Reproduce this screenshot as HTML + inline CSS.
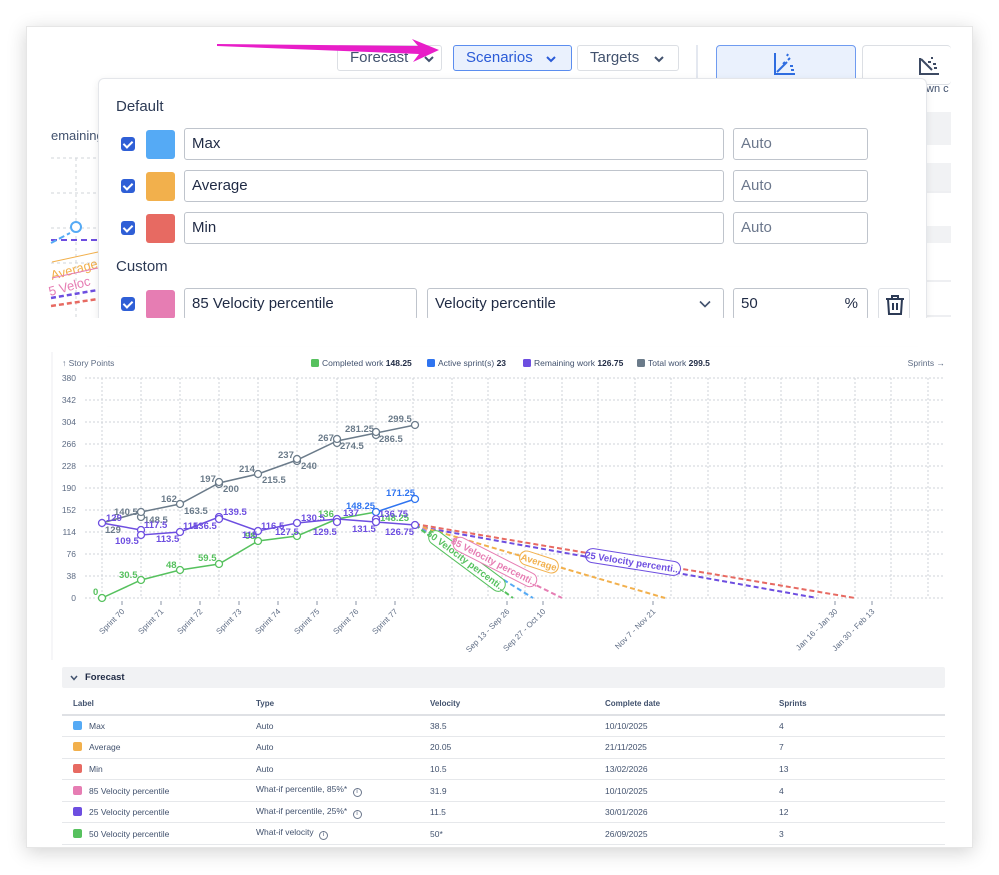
<!DOCTYPE html>
<html><head><meta charset="utf-8">
<style>
*{box-sizing:border-box;margin:0;padding:0}
body{width:999px;height:875px;background:#fff;position:relative;overflow:hidden;font-family:"Liberation Sans",sans-serif;color:#1f2a44}
.abs{position:absolute}
.card{left:26px;top:26px;width:947px;height:822px;background:#fff;box-shadow:0 4px 18px rgba(0,0,0,.18);border:1px solid #e6e6e6}
.btn{position:absolute;height:26px;border:1px solid #dcdfe4;border-radius:3px;background:#fff;font-size:15px;color:#42526e;line-height:24px;padding-left:12px}
.btn svg,.in svg{position:absolute;top:9px}
.pop{left:98px;top:78px;width:829px;height:260px;background:#fff;border:1px solid #e4e6ea;border-radius:6px;box-shadow:0 2px 8px rgba(0,0,0,.08)}
.h{font-size:15px;color:#2c3a55}
.cb{position:absolute;width:14px;height:14px;border-radius:3px;background:#2f5fd6}
.cb:after{content:"";position:absolute;left:4px;top:2px;width:4px;height:7px;border:solid #fff;border-width:0 2px 2px 0;transform:rotate(45deg)}
.sw{position:absolute;width:29px;height:29px;border-radius:3px}
.in{position:absolute;height:32px;border:1.5px solid #bfc4cc;border-radius:3px;font-size:15px;line-height:30px;padding-left:7px;color:#1f2a44;background:#fff}
.ph{color:#6b778c}
table{border-collapse:collapse}
.tb{left:62px;top:693px;width:883px;font-size:8.5px;color:#42526e}
.tb td{height:21.6px;border-bottom:1px solid #e6e8eb;vertical-align:middle}
.tb th{height:22px;text-align:left;font-weight:bold;color:#42526e;border-bottom:2px solid #dfe1e5;font-size:8px}
.s{display:inline-block;width:9px;height:9px;border-radius:2px;vertical-align:-1px;margin-right:7px}
.i{display:inline-block;width:9px;height:9px;border:1px solid #6b778c;border-radius:50%;font-size:6px;line-height:7px;text-align:center;margin-left:3px;vertical-align:-1px}
</style></head><body>
<div class="abs card"></div>

<div class="abs" style="left:51px;top:128px;font-size:13px;color:#42526e">emaining</div>
<svg class="abs" style="left:0;top:0" width="999" height="330">
<g stroke="#d0d4da" stroke-dasharray="3 3" stroke-width="1">
<line x1="51" y1="158" x2="98" y2="158"/><line x1="51" y1="193" x2="98" y2="193"/><line x1="51" y1="228" x2="98" y2="228"/><line x1="51" y1="263" x2="98" y2="263"/><line x1="76" y1="158" x2="76" y2="318"/>
</g>
<line x1="51" y1="240" x2="98" y2="240" stroke="#6d4ee0" stroke-width="2" stroke-dasharray="6 4"/>
<line x1="51" y1="243" x2="70" y2="233" stroke="#55aaf5" stroke-width="2" stroke-dasharray="6 3"/>
<circle cx="76" cy="227" r="5" fill="#fff" stroke="#55aaf5" stroke-width="2"/>
<text x="52" y="280" font-size="13" fill="#f2b04c" transform="rotate(-15 52 280)">Average</text>
<text x="50" y="296" font-size="13" fill="#e67db3" transform="rotate(-15 50 296)">5 Veloc</text>
<line x1="51" y1="298" x2="98" y2="290" stroke="#6d4ee0" stroke-width="2.5" stroke-dasharray="5 3"/>
<line x1="51" y1="306" x2="98" y2="299" stroke="#e76a62" stroke-width="2.5" stroke-dasharray="5 3"/>
<line x1="52" y1="262" x2="98" y2="252" stroke="#f2b04c" stroke-width="1"/>
<line x1="52" y1="278" x2="98" y2="268" stroke="#e67db3" stroke-width="1"/>
<rect x="927" y="112" width="24" height="33" fill="#f1f2f4"/>
<rect x="927" y="163" width="24" height="28" fill="#f1f2f4"/>
<line x1="927" y1="192" x2="951" y2="192" stroke="#dcdfe4"/>
<rect x="927" y="226" width="24" height="17" fill="#f1f2f4"/>
<line x1="927" y1="281" x2="951" y2="281" stroke="#dcdfe4"/>
<line x1="927" y1="316" x2="951" y2="316" stroke="#dcdfe4"/>
<line x1="697" y1="45" x2="697" y2="80" stroke="#e4e8f0" stroke-width="2"/>
</svg>

<div class="btn" style="left:337px;top:45px;width:105px">Forecast<svg style="left:86px" width="10" height="8"><path d="M1 2 L5 6 L9 2" stroke="#42526e" stroke-width="2" fill="none"/></svg></div>
<div class="btn" style="left:453px;top:45px;width:119px;border-color:#5b8def;background:#eaf1fd;color:#2a5bd7">Scenarios<svg style="left:92px" width="10" height="8"><path d="M1 2 L5 6 L9 2" stroke="#2a5bd7" stroke-width="2" fill="none"/></svg></div>
<div class="btn" style="left:577px;top:45px;width:102px">Targets<svg style="left:76px" width="10" height="8"><path d="M1 2 L5 6 L9 2" stroke="#42526e" stroke-width="2" fill="none"/></svg></div>
<div class="abs" style="left:716px;top:45px;width:140px;height:40px;border:1px solid #6f9bf0;border-radius:4px;background:#eaf1fd"></div>
<div class="abs" style="left:862px;top:45px;width:89px;height:40px;border:1px solid #dcdfe4;border-radius:4px;border-right:none;background:#fff"></div>
<div class="abs" style="left:926px;top:83px;font-size:11px;color:#42526e">wn c</div>
<svg class="abs" style="left:0;top:0" width="999" height="90">
<g stroke="#2f6de0" stroke-width="2" fill="none"><path d="M775 53 V74 H795"/><path d="M777 72 L787 62" /><path d="M783 64 l2-2 M788 60 l2-2 M790 66 h3 M791 70 h3 M787 56 l1-2"/></g>
<g stroke="#3d4a63" stroke-width="2" fill="none"><path d="M920 58 V74 H939"/><path d="M921 59 L932 70"/><path d="M928 62 h3 M933 64 h3 M931 58 l2 0 M934 68 h3"/></g>
<polygon points="217,44 418,46 412,39 439,50 413,62 419,54 217,46" fill="#e81ec8"/>
</svg>

<div class="abs pop">
<div class="abs h" style="left:17px;top:19px">Default</div>
<div class="cb" style="left:22px;top:58px"></div><div class="sw" style="left:47px;top:51px;background:#55aaf5"></div>
<div class="in" style="left:85px;top:49px;width:540px">Max</div><div class="in ph" style="left:634px;top:49px;width:135px">Auto</div>
<div class="cb" style="left:22px;top:100px"></div><div class="sw" style="left:47px;top:93px;background:#f2b04c"></div>
<div class="in" style="left:85px;top:91px;width:540px">Average</div><div class="in ph" style="left:634px;top:91px;width:135px">Auto</div>
<div class="cb" style="left:22px;top:142px"></div><div class="sw" style="left:47px;top:135px;background:#e76a62"></div>
<div class="in" style="left:85px;top:133px;width:540px">Min</div><div class="in ph" style="left:634px;top:133px;width:135px">Auto</div>
<div class="abs h" style="left:17px;top:179px">Custom</div>
<div class="cb" style="left:22px;top:218px"></div><div class="sw" style="left:47px;top:211px;background:#e67db3"></div>
<div class="in" style="left:85px;top:209px;width:233px">85 Velocity percentile</div>
<div class="in" style="left:328px;top:209px;width:297px">Velocity percentile<svg style="left:271px;top:11px" width="12" height="8"><path d="M1 1.5 L6 6.5 L11 1.5" stroke="#42526e" stroke-width="1.6" fill="none"/></svg></div>
<div class="in" style="left:634px;top:209px;width:135px">50<span style="position:absolute;right:9px">%</span></div>
<div class="abs" style="left:779px;top:209px;width:32px;height:32px;border:1px solid #dcdfe4;border-radius:3px">
<svg width="32" height="32"><g stroke="#2c3a55" stroke-width="2" fill="none"><path d="M7 10 H25 M13 10 V7 H19 V10 M9 10 L10 25 H22 L23 10 M14 14 V21 M18 14 V21"/></g></svg></div>
</div>
<div class="abs" style="left:27px;top:318px;width:945px;height:28px;background:#fff"></div>

<svg class="abs" style="left:0;top:0" width="999" height="660" font-family="Liberation Sans, sans-serif">
<line x1="52" y1="352" x2="52" y2="660" stroke="#eceef1"/>
<text x="62" y="366" font-size="8.5" fill="#5e6c84">↑ Story Points</text>
<rect x="311" y="359" width="8" height="8" rx="1.5" fill="#56c15e"/><text x="322" y="366" font-size="8.5" fill="#42526e">Completed work <tspan font-weight="bold" fill="#1f2a44">148.25</tspan></text>
<rect x="427" y="359" width="8" height="8" rx="1.5" fill="#2f74f0"/><text x="438" y="366" font-size="8.5" fill="#42526e">Active sprint(s) <tspan font-weight="bold" fill="#1f2a44">23</tspan></text>
<rect x="523" y="359" width="8" height="8" rx="1.5" fill="#6d4ee0"/><text x="534" y="366" font-size="8.5" fill="#42526e">Remaining work <tspan font-weight="bold" fill="#1f2a44">126.75</tspan></text>
<rect x="637" y="359" width="8" height="8" rx="1.5" fill="#6b7b8a"/><text x="648" y="366" font-size="8.5" fill="#42526e">Total work <tspan font-weight="bold" fill="#1f2a44">299.5</tspan></text>
<text x="945" y="366" font-size="8.5" fill="#5e6c84" text-anchor="end">Sprints →</text>
<g font-size="8.5" fill="#5e6c84" text-anchor="end">
<text x="76" y="381">380</text><text x="76" y="403">342</text><text x="76" y="425">304</text><text x="76" y="447">266</text><text x="76" y="469">228</text><text x="76" y="491">190</text><text x="76" y="513">152</text><text x="76" y="535">114</text><text x="76" y="557">76</text><text x="76" y="579">38</text><text x="76" y="601">0</text>
</g>
<g stroke="#cfd3d9" stroke-dasharray="2 2" stroke-width="1">
<line x1="85" y1="378" x2="945" y2="378"/><line x1="85" y1="400" x2="945" y2="400"/><line x1="85" y1="422" x2="945" y2="422"/><line x1="85" y1="444" x2="945" y2="444"/><line x1="85" y1="466" x2="945" y2="466"/><line x1="85" y1="488" x2="945" y2="488"/><line x1="85" y1="510" x2="945" y2="510"/><line x1="85" y1="532" x2="945" y2="532"/><line x1="85" y1="554" x2="945" y2="554"/><line x1="85" y1="576" x2="945" y2="576"/><line x1="85" y1="598" x2="945" y2="598"/>
<line x1="102" y1="378" x2="102" y2="598"/><line x1="141" y1="378" x2="141" y2="598"/><line x1="180" y1="378" x2="180" y2="598"/><line x1="219" y1="378" x2="219" y2="598"/><line x1="258" y1="378" x2="258" y2="598"/><line x1="297" y1="378" x2="297" y2="598"/><line x1="337" y1="378" x2="337" y2="598"/><line x1="376" y1="378" x2="376" y2="598"/><line x1="413" y1="378" x2="413" y2="598"/><line x1="452" y1="378" x2="452" y2="598"/><line x1="488" y1="378" x2="488" y2="598"/><line x1="525" y1="378" x2="525" y2="598"/><line x1="562" y1="378" x2="562" y2="598"/><line x1="598" y1="378" x2="598" y2="598"/><line x1="635" y1="378" x2="635" y2="598"/><line x1="671" y1="378" x2="671" y2="598"/><line x1="708" y1="378" x2="708" y2="598"/><line x1="745" y1="378" x2="745" y2="598"/><line x1="781" y1="378" x2="781" y2="598"/><line x1="818" y1="378" x2="818" y2="598"/><line x1="855" y1="378" x2="855" y2="598"/><line x1="891" y1="378" x2="891" y2="598"/><line x1="928" y1="378" x2="928" y2="598"/>
</g>
<g stroke="#8993a4" stroke-width="1">
<line x1="122" y1="601" x2="122" y2="605"/><line x1="161" y1="601" x2="161" y2="605"/><line x1="200" y1="601" x2="200" y2="605"/><line x1="239" y1="601" x2="239" y2="605"/><line x1="278" y1="601" x2="278" y2="605"/><line x1="317" y1="601" x2="317" y2="605"/><line x1="356" y1="601" x2="356" y2="605"/><line x1="395" y1="601" x2="395" y2="605"/>
<line x1="507" y1="601" x2="507" y2="605"/><line x1="543" y1="601" x2="543" y2="605"/><line x1="653" y1="601" x2="653" y2="605"/><line x1="835" y1="601" x2="835" y2="605"/><line x1="872" y1="601" x2="872" y2="605"/>
</g>
<g font-size="8" fill="#5e6c84" text-anchor="end">
<text transform="translate(125,612) rotate(-45)">Sprint 70</text><text transform="translate(164,612) rotate(-45)">Sprint 71</text><text transform="translate(203,612) rotate(-45)">Sprint 72</text><text transform="translate(242,612) rotate(-45)">Sprint 73</text><text transform="translate(281,612) rotate(-45)">Sprint 74</text><text transform="translate(320,612) rotate(-45)">Sprint 75</text><text transform="translate(359,612) rotate(-45)">Sprint 76</text><text transform="translate(398,612) rotate(-45)">Sprint 77</text>
<text transform="translate(510,612) rotate(-45)">Sep 13 - Sep 26</text><text transform="translate(546,612) rotate(-45)">Sep 27 - Oct 10</text><text transform="translate(656,612) rotate(-45)">Nov 7 - Nov 21</text><text transform="translate(838,612) rotate(-45)">Jan 16 - Jan 30</text><text transform="translate(875,612) rotate(-45)">Jan 30 - Feb 13</text>
</g>
<g stroke-width="2" stroke-dasharray="5 3" fill="none">
<line x1="415" y1="524" x2="855" y2="598" stroke="#e76a62"/>
<line x1="415" y1="526" x2="817" y2="598" stroke="#6d4ee0"/>
<line x1="415" y1="525" x2="665" y2="598" stroke="#f2b04c"/>
<line x1="415" y1="525" x2="562" y2="598" stroke="#e67db3"/>
<line x1="415" y1="525" x2="533" y2="598" stroke="#55aaf5"/>
<line x1="415" y1="525" x2="513" y2="598" stroke="#56c15e"/>
</g>
<g font-size="9.5" font-weight="bold">
<g transform="translate(467,561) rotate(36.7)"><rect x="-46" y="-7" width="92" height="14" rx="7" fill="#fff" stroke="#56c15e"/><text x="0" y="3.5" fill="#56c15e" text-anchor="middle">50 Velocity percenti...</text></g>
<g transform="translate(495,562) rotate(27)"><rect x="-46" y="-7" width="92" height="14" rx="7" fill="#fff" stroke="#e67db3"/><text x="0" y="3.5" fill="#e67db3" text-anchor="middle">85 Velocity percenti...</text></g>
<g transform="translate(539,562) rotate(18)"><rect x="-20" y="-7" width="40" height="14" rx="7" fill="#fff" stroke="#f2b04c"/><text x="0" y="3.5" fill="#f2b04c" text-anchor="middle">Average</text></g>
<g transform="translate(633,562) rotate(9)"><rect x="-48" y="-7" width="96" height="14" rx="7" fill="#fff" stroke="#6d4ee0"/><text x="0" y="3.5" fill="#6d4ee0" text-anchor="middle">25 Velocity percenti...</text></g>
</g>
<g fill="none" stroke-width="1.5">
<polyline stroke="#6b7b8a" points="102,523 141,512 180,504 219,483 258,474 297,460 337,441 376,433 415,425"/>
<polyline stroke="#56c15e" points="102,598 141,580 180,570 219,564 258,541 297,536 337,519 376,512"/>
<polyline stroke="#2f74f0" points="376,512 415,499"/>
<polyline stroke="#6d4ee0" points="102,523 141,530 141,535 180,532 219,517 258,531 297,523 337,519 376,522 415,525"/>
</g>
<g fill="#fff" stroke-width="1.3">
<g stroke="#6b7b8a"><circle cx="141" cy="517" r="3.5"/><circle cx="141" cy="512" r="3.5"/><circle cx="180" cy="504" r="3.5"/><circle cx="219" cy="484" r="3.5"/><circle cx="219" cy="482" r="3.5"/><circle cx="258" cy="474" r="3.5"/><circle cx="297" cy="461" r="3.5"/><circle cx="297" cy="459" r="3.5"/><circle cx="337" cy="443" r="3.5"/><circle cx="337" cy="439" r="3.5"/><circle cx="376" cy="435" r="3.5"/><circle cx="376" cy="432" r="3.5"/><circle cx="415" cy="425" r="3.5"/></g>
<g stroke="#56c15e"><circle cx="102" cy="598" r="3.5"/><circle cx="141" cy="580" r="3.5"/><circle cx="180" cy="570" r="3.5"/><circle cx="219" cy="564" r="3.5"/><circle cx="258" cy="541" r="3.5"/><circle cx="297" cy="536" r="3.5"/></g>
<g stroke="#2f74f0"><circle cx="376" cy="512" r="3.5"/><circle cx="415" cy="499" r="3.5"/></g>
<g stroke="#6d4ee0"><circle cx="102" cy="523" r="3.5"/><circle cx="141" cy="530" r="3.5"/><circle cx="141" cy="535" r="3.5"/><circle cx="180" cy="532" r="3.5"/><circle cx="219" cy="517" r="3.5"/><circle cx="219" cy="519" r="3.5"/><circle cx="258" cy="531" r="3.5"/><circle cx="297" cy="523" r="3.5"/><circle cx="337" cy="519" r="3.5"/><circle cx="337" cy="522" r="3.5"/><circle cx="376" cy="519" r="3.5"/><circle cx="376" cy="522" r="3.5"/><circle cx="415" cy="525" r="3.5"/></g>
</g>
<g font-size="9.5" font-weight="bold">
<g fill="#6b7b8a"><text x="114" y="515">140.5</text><text x="144" y="523">148.5</text><text x="161" y="502">162</text><text x="184" y="514">163.5</text><text x="200" y="482">197</text><text x="223" y="492">200</text><text x="239" y="472">214</text><text x="262" y="483">215.5</text><text x="278" y="458">237</text><text x="301" y="469">240</text><text x="318" y="441">267</text><text x="340" y="449">274.5</text><text x="345" y="432">281.25</text><text x="379" y="442">286.5</text><text x="388" y="422">299.5</text><text x="105" y="533">129</text></g>
<g fill="#56c15e"><text x="93" y="595">0</text><text x="119" y="578">30.5</text><text x="166" y="568">48</text><text x="198" y="561">59.5</text><text x="245" y="539">98</text><text x="318" y="517">136</text><text x="380" y="521">148.25</text></g>
<g fill="#2f74f0"><text x="346" y="509">148.25</text><text x="386" y="496">171.25</text></g>
<g fill="#6d4ee0"><text x="106" y="521">129</text><text x="144" y="528">117.5</text><text x="115" y="544">109.5</text><text x="156" y="542">113.5</text><text x="183" y="529">115</text><text x="193" y="529">136.5</text><text x="223" y="515">139.5</text><text x="261" y="529">116.5</text><text x="242" y="538">115</text><text x="275" y="535">127.5</text><text x="301" y="521">130.5</text><text x="313" y="535">129.5</text><text x="343" y="516">137</text><text x="352" y="532">131.5</text><text x="379" y="517">136.75</text><text x="385" y="535">126.75</text></g>
</g>
</svg>

<div class="abs" style="left:62px;top:667px;width:883px;height:21px;background:#f1f2f4;border-radius:2px;font-size:9.5px;font-weight:bold;line-height:21px;padding-left:23px;color:#1f2a44"><svg style="position:absolute;left:8px;top:8px" width="8" height="6"><path d="M1 1 L4 4.5 L7 1" stroke="#42526e" stroke-width="1.5" fill="none"/></svg>Forecast</div>
<table class="abs tb">
<tr><th style="width:194px;padding-left:11px">Label</th><th style="width:174px">Type</th><th style="width:175px">Velocity</th><th style="width:174px">Complete date</th><th>Sprints</th></tr>
<tr><td style="padding-left:11px"><span class="s" style="background:#55aaf5"></span>Max</td><td>Auto</td><td>38.5</td><td>10/10/2025</td><td>4</td></tr>
<tr><td style="padding-left:11px"><span class="s" style="background:#f2b04c"></span>Average</td><td>Auto</td><td>20.05</td><td>21/11/2025</td><td>7</td></tr>
<tr><td style="padding-left:11px"><span class="s" style="background:#e76a62"></span>Min</td><td>Auto</td><td>10.5</td><td>13/02/2026</td><td>13</td></tr>
<tr><td style="padding-left:11px"><span class="s" style="background:#e67db3"></span>85 Velocity percentile</td><td>What-if percentile, 85%* <span class="i">i</span></td><td>31.9</td><td>10/10/2025</td><td>4</td></tr>
<tr><td style="padding-left:11px"><span class="s" style="background:#6d4ee0"></span>25 Velocity percentile</td><td>What-if percentile, 25%* <span class="i">i</span></td><td>11.5</td><td>30/01/2026</td><td>12</td></tr>
<tr><td style="padding-left:11px"><span class="s" style="background:#56c15e"></span>50 Velocity percentile</td><td>What-if velocity <span class="i">i</span></td><td>50*</td><td>26/09/2025</td><td>3</td></tr>
</table>
</body></html>
